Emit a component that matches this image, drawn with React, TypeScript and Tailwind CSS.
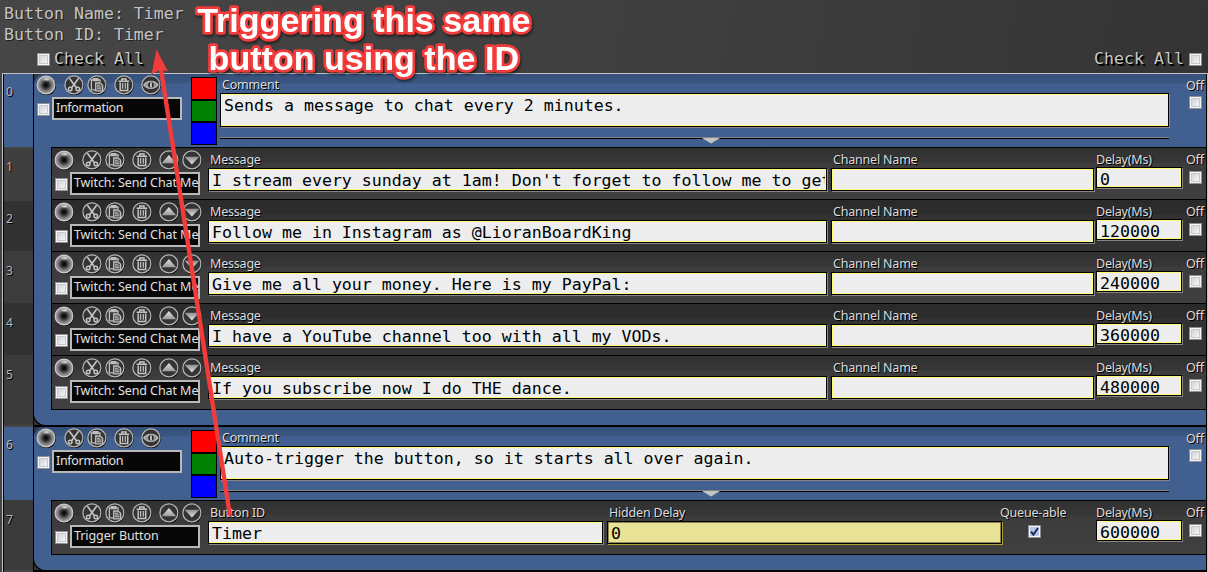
import React from 'react';

const SANS = "font-['Noto_Sans',sans-serif]";
const LABEL =
  "font-['Noto_Sans',sans-serif] text-[12.5px] tracking-[-0.2px] whitespace-nowrap text-[#dcdcdc] [text-shadow:1px_1px_0_#000]";

type IconName = 'orb' | 'cut' | 'paste' | 'trash' | 'eye' | 'up' | 'down';

function Icon({ name }: { name: IconName }) {
  if (name === 'orb') {
    return (
      <svg width="20" height="20" viewBox="0 0 20 20" className="shrink-0">
        <defs>
          <radialGradient id="orb">
            <stop offset="0" stopColor="#060606" />
            <stop offset="0.22" stopColor="#161616" />
            <stop offset="0.7" stopColor="#808080" />
            <stop offset="1" stopColor="#b0b0b0" />
          </radialGradient>
          <radialGradient id="glint">
            <stop offset="0" stopColor="#fff" stopOpacity="0.75" />
            <stop offset="1" stopColor="#fff" stopOpacity="0" />
          </radialGradient>
        </defs>
        <circle cx="10.5" cy="10.7" r="9.5" fill="#060606" />
        <circle cx="10" cy="10" r="8.9" fill="url(#orb)" stroke="#cdcdcd" strokeWidth="1.1" />
        <ellipse cx="10.6" cy="4.2" rx="4.5" ry="2.4" fill="url(#glint)" />
      </svg>
    );
  }
  return (
    <svg width="20" height="20" viewBox="0 0 20 20" fill="none" className="shrink-0">
      <defs>
        <linearGradient id="arrowFill" x1="0" y1="0" x2="0" y2="1">
          <stop offset="0" stopColor="#e2e2e2" />
          <stop offset="1" stopColor="#9a9a9a" />
        </linearGradient>
        <linearGradient id="arrowFillDown" x1="0" y1="0" x2="0" y2="1">
          <stop offset="0" stopColor="#8e8e8e" />
          <stop offset="1" stopColor="#e8e8e8" />
        </linearGradient>
      </defs>
      <circle cx="10.5" cy="10.8" r="9.4" fill="#060606" />
      <circle cx="9.9" cy="9.9" r="9" fill="#343434" stroke="#b8b8b8" strokeWidth="1.2" />
      {name === 'cut' && (
        <g stroke="#c6c6c6" strokeWidth="1.6">
          <path d="M5.4 3.2 12.4 12.8M14.6 3.2 7.6 12.8" />
          <circle cx="6.2" cy="14" r="1.8" strokeWidth="1.4" />
          <circle cx="13.8" cy="14" r="1.8" strokeWidth="1.4" />
        </g>
      )}
      {name === 'paste' && (
        <g stroke="#bebebe" strokeWidth="1.3">
          <path d="M8 14.8H4.4V5H13V7.2" />
          <path d="M6.5 5.2V3.6H10.9V5.7H6.5Z" fill="#bebebe" />
          <path d="M8.7 8H13L15.6 10.3V15.8H8.7Z" fill="#4a4a4a" />
          <path d="M10 10.3h3M10 12h4.4M10 13.8h4.4" strokeWidth="1.1" />
        </g>
      )}
      {name === 'trash' && (
        <g stroke="#c4c4c4" strokeWidth="1.5">
          <path d="M4.6 6.2H15.2M7.8 5.8V4H12V5.8" />
          <path d="M6.2 7.6V15.5H13.7V7.6" />
          <path d="M8.6 8V13.7M11.3 8V13.7" strokeWidth="1.2" />
        </g>
      )}
      {name === 'eye' && (
        <g>
          <path d="M2.8 10C6 5 13.8 5 17 10C13.8 14.6 6 14.6 2.8 10Z" fill="#999" stroke="#c6c6c6" strokeWidth="1.2" />
          <circle cx="10" cy="9.9" r="3.4" fill="#292929" stroke="#bbb" strokeWidth="0.8" />
          <path d="M10 7.4v5" stroke="#ddd" strokeWidth="1.6" />
        </g>
      )}
      {name === 'up' && <path d="M2.6 13.2 9.9 5 17.2 13.2Z" fill="url(#arrowFill)" />}
      {name === 'down' && <path d="M2.6 6.8H17.2L9.9 14.6Z" fill="url(#arrowFillDown)" />}
    </svg>
  );
}

function Check({ on }: { on?: boolean }) {
  return (
    <span className="flex h-[13px] w-[13px] shrink-0 items-center justify-center border border-[#8e8f8f] bg-[#f7f7f7]">
      {on ? (
        <span className="flex h-[9px] w-[9px] items-center justify-center bg-[#b9c6e8]">
          <svg width="9" height="9" viewBox="0 0 9 9" fill="none">
            <path d="M1 4.6 3.4 7.6 8 1" stroke="#1b2b5c" strokeWidth="2" />
          </svg>
        </span>
      ) : (
        <span className="h-[9px] w-[9px] border border-[#c6c8ce] bg-linear-to-br from-[#d2d4da] to-[#f5f5f5]" />
      )}
    </span>
  );
}

function Controls({ name, nested }: { name: string; nested?: boolean }) {
  return (
    <div className={nested ? 'w-[156px] shrink-0 pt-[2px] pl-[2px]' : 'w-[157px] shrink-0 pt-[1px] pl-[2px]'}>
      <div className="flex">
        <Icon name="orb" />
        <div className="ml-2 flex gap-[3px]">
          <Icon name="cut" />
          <Icon name="paste" />
        </div>
        <div className="ml-[7px] flex">
          <Icon name="trash" />
        </div>
        <div className="ml-[7px] flex gap-[3px]">
          {nested ? (
            <>
              <Icon name="up" />
              <Icon name="down" />
            </>
          ) : (
            <Icon name="eye" />
          )}
        </div>
      </div>
      <div className="mt-[2px] flex pl-[1px]">
        <div className="mt-[6px]">
          <Check />
        </div>
        <div className="ml-[2px] h-[23px] w-[130px] border-2 border-[#b9b9b9] bg-[#070707] pl-[2px]">
          <div
            className={`${SANS} text-[12.5px] leading-[18px] whitespace-nowrap text-[#e0e0e0] ${
              nested ? 'tracking-[-0.08px]' : 'tracking-[-0.32px]'
            }`}
          >
            {name}
          </div>
        </div>
      </div>
    </div>
  );
}

const MONO = "font-['DejaVu_Sans_Mono',monospace] text-[16.6px] whitespace-pre";

function Field({ label, value, width, kind }: { label: string; value: string; width: string; kind?: 'delay' | 'locked' }) {
  const locked = kind === 'locked';
  const delay = kind === 'delay';
  return (
    <div className={`${width} shrink-0`}>
      <div className={`${LABEL} ${delay ? 'h-[19px]' : 'h-5 pl-[2px]'} leading-[23px]`}>{label}</div>
      <div
        className={`border border-black ${delay ? 'h-[21px]' : 'h-[23px]'} ${
          locked ? 'shadow-[1px_1px_0_#a8a032]' : 'shadow-[1px_1px_0_#858585]'
        }`}
      >
        <div
          className={`${MONO} h-full overflow-hidden border pl-[2px] text-black ${
            delay ? 'leading-[21px]' : 'leading-[22px]'
          } ${locked ? 'border-[#8d8650] bg-[#e8e297]' : 'border-[#ffff78] bg-[#ededed]'}`}
        >
          {value}
        </div>
      </div>
    </div>
  );
}

function Off() {
  return (
    <div className="ml-auto flex w-5 shrink-0 flex-col">
      <div className={`${LABEL} h-[23px] leading-[23px]`}>Off</div>
      <div className="pl-[3px]">
        <Check />
      </div>
    </div>
  );
}

function CommandRow({ dark, last, name, children }: { dark?: boolean; last?: boolean; name: string; children: React.ReactNode }) {
  return (
    <div
      className={`flex border-t border-black ${last ? 'h-[55px] border-b' : 'h-[52px]'} ${
        dark
          ? 'bg-[linear-gradient(#2a2a2a_0,#2d2d2d_14px,#323232_15px,#333_100%)]'
          : 'bg-[linear-gradient(#313131_0,#373737_14px,#3c3c3c_15px,#404040_100%)]'
      }`}
    >
      <Controls name={name} nested />
      {children}
      <Off />
    </div>
  );
}

function InfoRow({ comment }: { comment: string }) {
  return (
    <div className="flex h-[73px]">
      <Controls name="Information" />
      <div className="mt-[3px] h-[68px] w-[26px] shrink-0 border border-black">
        <div className="h-[23px] border-b-2 border-black bg-[#f00]" />
        <div className="h-[22px] border-b-2 border-black bg-[#008000]" />
        <div className="h-[21px] bg-[#00f]" />
      </div>
      <div className="ml-[3px] w-[949px] shrink-0">
        <div className={`${LABEL} h-[19px] pl-[2px] leading-[22px]`}>Comment</div>
        <div className="h-[34px] border border-black shadow-[1px_1px_0_#858585]">
          <div className={`${MONO} h-full border border-[#ffff78] bg-[#ededed] pl-[2px] leading-[22px] text-black`}>{comment}</div>
        </div>
        <div className="mt-[10px] flex justify-center border-t border-[#858585] pl-[32px] shadow-[inset_0_1px_0_#000]">
          <svg width="18" height="6" viewBox="0 0 18 6">
            <path d="M0 0H18L9 5.5Z" fill="#c4c4c4" />
          </svg>
        </div>
      </div>
      <div className="ml-auto flex w-5 shrink-0 flex-col">
        <div className={`${LABEL} h-[22px] leading-[23px]`}>Off</div>
        <div className="pl-[3px]">
          <Check />
        </div>
      </div>
    </div>
  );
}

function Group({ comment, children }: { comment: string; children: React.ReactNode }) {
  return (
    <div className="flex min-w-0 flex-1 border-l border-black bg-[#333]">
      <div className="min-w-0 flex-1 rounded-tl-[9px] rounded-bl-[12px] bg-[linear-gradient(#35507a_0,#3a5681_9px,#41608f_10px)] pb-[16px] shadow-[-1px_1px_0_#000]">
        <InfoRow comment={comment} />
        <div className="ml-[17px] border-l border-black">{children}</div>
      </div>
    </div>
  );
}

function GutterCell({ n, tone }: { n: string; tone: string }) {
  return (
    <div className={`${tone} ${SANS} pl-[2px] text-[12px] leading-[18px] text-[#b8b8b8] [text-shadow:1px_1px_0_#000]`}>{n}</div>
  );
}

const messages = [
  ["I stream every sunday at 1am! Don't forget to follow me to get", '0'],
  ['Follow me in Instagram as @LioranBoardKing', '120000'],
  ['Give me all your money. Here is my PayPal:', '240000'],
  ['I have a YouTube channel too with all my VODs.', '360000'],
  ['If you subscribe now I do THE dance.', '480000'],
];

const HEAD = `${MONO} text-[#c4c4c4] [text-shadow:1px_1px_0_#222]`;
const HEAD_DEEP = `${MONO} text-[#c8c8c8] [text-shadow:1px_1px_0_#000,2px_2px_0_#000]`;

export default function App() {
  return (
    <div className="relative flex h-[572px] w-[1208px] flex-col overflow-hidden bg-[linear-gradient(100deg,#464646,#3f3f3f_50%,#323232)]">
      <header className="h-[73px] shrink-0">
        <div className={`${HEAD} h-[21px] pt-[3px] pl-1 leading-[21px]`}>Button Name: Timer</div>
        <div className={`${HEAD} h-[27px] pt-[3px] pl-1 leading-[21px]`}>Button ID: Timer</div>
        <div className="flex items-center pr-[6px] pl-[37px]">
          <Check />
          <span className={`${HEAD_DEEP} ml-1 leading-[22px]`}>Check All</span>
          <span className={`${HEAD_DEEP} mr-[5px] ml-auto leading-[22px]`}>Check All</span>
          <Check />
        </div>
      </header>

      <main className="ml-[2px] h-[499px] shrink-0 overflow-hidden border-t border-r border-l border-[#c4c4c4]">
        <div className="border-r border-l border-black">
          <div className="flex h-[351px]">
            <div className="w-[29px] shrink-0">
              <GutterCell n="0" tone="h-[73px] bg-[#41608f] pt-[9px]" />
              <GutterCell n="1" tone="mt-[1px] h-[53px] bg-[#3f3f3f] pt-[10px]" />
              <GutterCell n="2" tone="h-[50px] bg-[#323232] pt-[9px]" />
              <GutterCell n="3" tone="h-[52px] bg-[#3c3c3c] pt-[11px]" />
              <GutterCell n="4" tone="h-[52px] bg-[#323232] pt-[11px]" />
              <GutterCell n="5" tone="h-[70px] bg-[#3b3b3b] pt-[11px]" />
            </div>
            <Group comment="Sends a message to chat every 2 minutes.">
              {messages.map(([text, delay], i) => (
                <CommandRow key={delay} dark={i % 2 === 1} last={i === 4} name="Twitch: Send Chat Me">
                  <div className="flex">
                    <Field label="Message" value={text} width="w-[619px]" />
                    <div className="w-[4px]" />
                    <Field label="Channel Name" value="" width="w-[263px]" />
                    <div className="w-[2px]" />
                    <Field label="Delay(Ms)" value={delay} width="w-[86px]" kind="delay" />
                  </div>
                </CommandRow>
              ))}
            </Group>
          </div>
          <div className="ml-[29px] h-[2px] bg-black" />
          <div className="flex h-[143px]">
            <div className="w-[29px] shrink-0">
              <GutterCell n="6" tone="h-[73px] bg-[#41608f] pt-[9px]" />
              <GutterCell n="7" tone="h-[70px] bg-[#3b3b3b] pt-[11px]" />
            </div>
            <Group comment="Auto-trigger the button, so it starts all over again.">
              <CommandRow last name="Trigger Button">
                <div className="flex">
                  <Field label="Button ID" value="Timer" width="w-[395px]" />
                  <div className="w-[4px]" />
                  <Field label="Hidden Delay" value="0" width="w-[395px]" kind="locked" />
                  <div className="flex w-[94px] flex-col">
                    <div className={`${LABEL} -ml-[2px] h-[24px] leading-[23px]`}>Queue-able</div>
                    <div className="pl-[26px]">
                      <Check on />
                    </div>
                  </div>
                  <Field label="Delay(Ms)" value="600000" width="w-[86px]" kind="delay" />
                </div>
              </CommandRow>
            </Group>
          </div>
          <div className="ml-[29px] h-[2px] bg-black" />
        </div>
      </main>

      <svg className="absolute top-0 left-0" width="1208" height="572" viewBox="0 0 1208 572">
        <path d="M160.5 66 230 516" stroke="#f23b3b" strokeWidth="4.4" />
        <path d="M156.5 49.5 168 71.5 160.5 69.5 151.5 74.5Z" fill="#f23b3b" />
        <g
          className="font-['Liberation_Sans',sans-serif] text-[34.1px] font-bold [filter:drop-shadow(1px_2px_1px_rgba(0,0,0,0.5))] [paint-order:stroke]"
          fill="#fff"
          stroke="#f23b3b"
          strokeWidth="5.5"
          strokeLinejoin="round"
          textAnchor="middle"
        >
          <text x="363.8" y="31.5">Triggering this same</text>
          <text x="363.8" y="69.5">button using the ID</text>
        </g>
      </svg>
    </div>
  );
}
